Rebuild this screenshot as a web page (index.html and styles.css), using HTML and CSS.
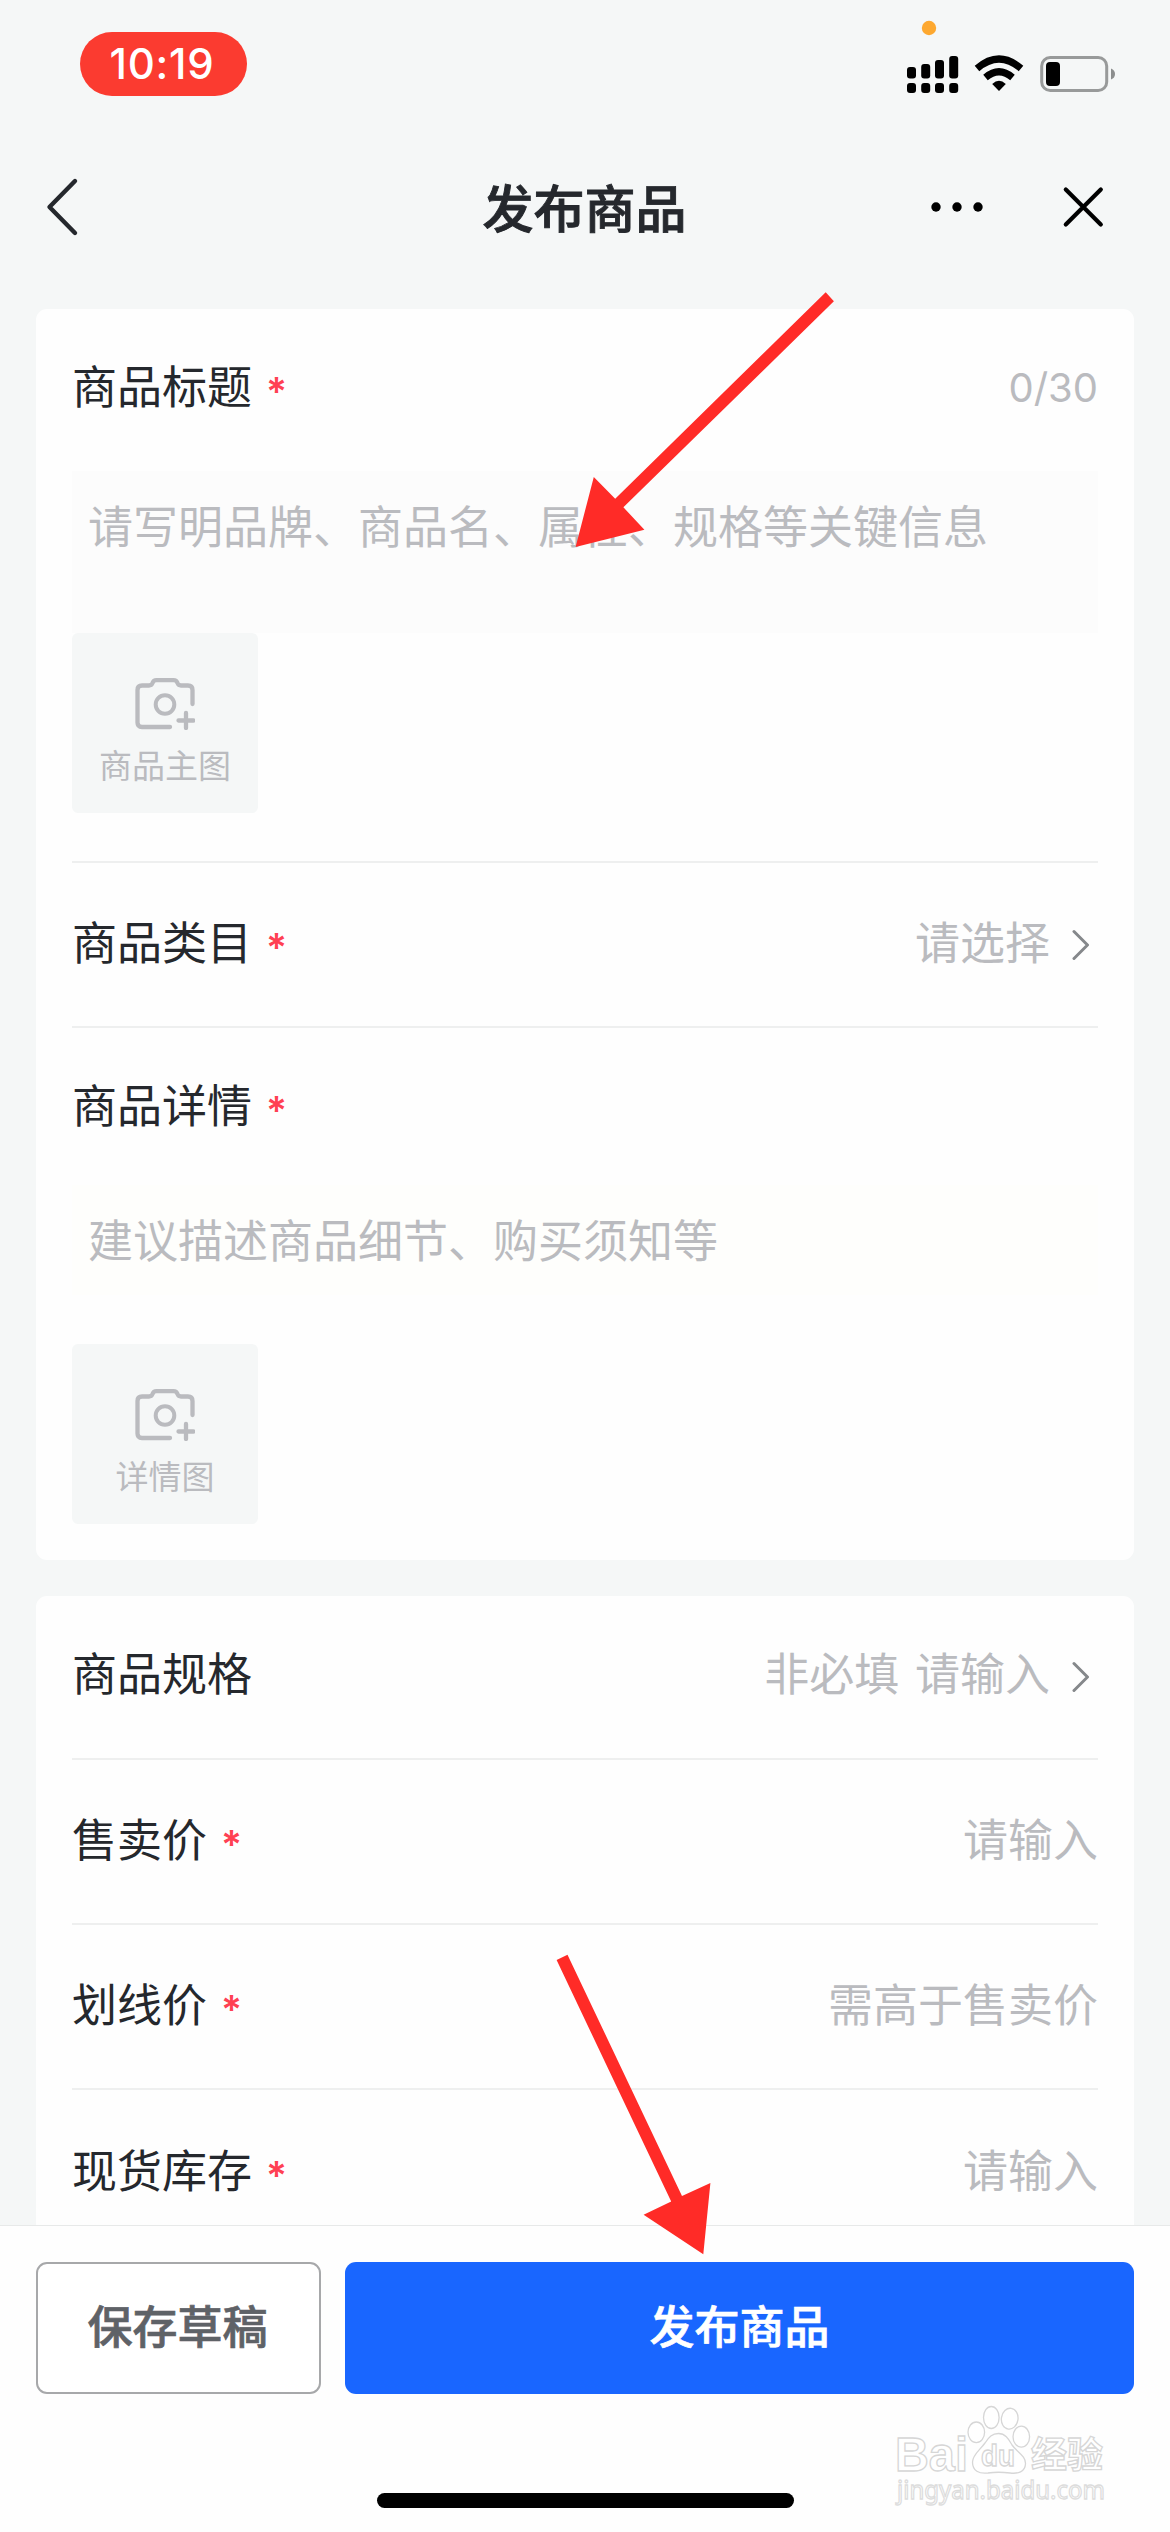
FILE: index.html
```html
<!DOCTYPE html>
<html lang="zh-CN">
<head>
<meta charset="utf-8">
<title>发布商品</title>
<link rel="stylesheet" href="styles.css">
</head>
<body>
<svg class="defs" width="0" height="0" aria-hidden="true">
  <symbol id="camera" viewBox="0 0 60 52">
    <path d="M35 49H7Q2.500 49 2.500 44.500V12Q2.500 7.500 7 7.500H14Q16.500 7.500 17.500 5Q18.500 2.200 21.500 2.200H38.500Q41.500 2.200 42.500 5Q43.500 7.500 46 7.500H53Q57.500 7.500 57.500 12V26" fill="none" stroke="currentColor" stroke-width="4.300" stroke-linecap="round"/>
    <circle cx="30" cy="26.500" r="9.300" fill="none" stroke="currentColor" stroke-width="4"/>
    <path d="M43.500 42.500H58.500M51 35V50" fill="none" stroke="currentColor" stroke-width="4.300" stroke-linecap="round"/>
  </symbol>
  <symbol id="more" viewBox="0 0 18 32">
    <path d="M2 2.500L15.500 16L2 29.500" fill="none" stroke="currentColor" stroke-width="3" stroke-linecap="round" stroke-linejoin="round"/>
  </symbol>
</svg>

<header class="status">
  <span class="clock">10:19</span>
  <svg class="status-icons" width="210" height="96" viewBox="906 0 210 96">
    <circle cx="929" cy="28" r="7.200" fill="#fda830"/>
    <g fill="#000">
      <rect x="907" y="67" width="9" height="11.500" rx="3"/>
      <rect x="921.200" y="64" width="9" height="14.500" rx="3"/>
      <rect x="935" y="60" width="9" height="18.500" rx="3"/>
      <rect x="949.200" y="56" width="9" height="22.500" rx="3"/>
      <rect x="907" y="83" width="9" height="10" rx="3"/>
      <rect x="921.200" y="83" width="9" height="10" rx="3"/>
      <rect x="935" y="83" width="9" height="10" rx="3"/>
      <rect x="949.200" y="83" width="9" height="10" rx="3"/>
      <path d="M992.200 84Q999 77.500 1005.800 84L999 91Z"/>
    </g>
    <path d="M977 68.500Q999 49.500 1021 68.500M985.500 77.500Q999 66 1012.500 77.500" fill="none" stroke="#000" stroke-width="7"/>
    <rect x="1041.700" y="57.500" width="65" height="33" rx="8.500" fill="none" stroke="#989a9a" stroke-width="3"/>
    <rect x="1046" y="62" width="14" height="24" rx="4" fill="#000"/>
    <path d="M1111 68.500Q1115 70 1115 74T1111 79.500Z" fill="#8c8e8e"/>
  </svg>
</header>

<nav class="nav">
  <svg width="34" height="60" viewBox="45 177 34 60"><path d="M75 181L49.500 207L75 233" fill="none" stroke="#25282d" stroke-width="4.400" stroke-linecap="round" stroke-linejoin="round"/></svg>
  <h1>发布商品</h1>
  <svg width="174" height="44" viewBox="930 185 174 44">
    <circle cx="936" cy="207" r="4.700"/><circle cx="957" cy="207" r="4.700"/><circle cx="978" cy="207" r="4.700"/>
    <path d="M1065.800 189.500L1100.800 224.500M1100.800 189.500L1065.800 224.500" stroke="#000" stroke-width="4.200" stroke-linecap="round"/>
  </svg>
</nav>

<main class="form">
  <section class="card">
    <div class="row head"><label>商品标题<i>*</i></label><span class="count">0/30</span></div>
    <div class="area title-area">请写明品牌、商品名、属性、规格等关键信息</div>
    <div class="upload"><svg width="60" height="52"><use href="#camera"/></svg><span>商品主图</span></div>
    <div class="row category"><label>商品类目<i>*</i></label><span class="value">请选择</span><svg class="arrow" width="18" height="32"><use href="#more"/></svg></div>
    <div class="row detail"><label>商品详情<i>*</i></label></div>
    <div class="area detail-area">建议描述商品细节、购买须知等</div>
    <div class="upload"><svg width="60" height="52"><use href="#camera"/></svg><span>详情图</span></div>
  </section>
  <section class="card">
    <div class="row line"><label>商品规格</label><span class="value">非必填 请输入</span><svg class="arrow" width="18" height="32"><use href="#more"/></svg></div>
    <div class="row line"><label>售卖价<i>*</i></label><span class="value">请输入</span></div>
    <div class="row line"><label>划线价<i>*</i></label><span class="value">需高于售卖价</span></div>
    <div class="row line"><label>现货库存<i>*</i></label><span class="value">请输入</span></div>
  </section>
</main>

<footer class="footer">
  <div class="actions">
    <button class="save">保存草稿</button>
    <button class="publish">发布商品</button>
  </div>
  <div class="home"></div>
</footer>

<svg class="overlay" width="1170" height="2532" viewBox="0 0 1170 2532">
  <g fill="#ff2b27">
    <path d="M825.700 292.300L833.900 301.300L623.400 507.300L644.400 529.700L575.600 547L593.800 477L615.200 498.700Z"/>
    <path d="M556.600 1960L567.500 1954.700L682 2196L710.400 2182.900L703.300 2254.300L643.600 2214.700L671.200 2201.600Z"/>
  </g>
  <g class="watermark">
    <text class="logo" x="895" y="2471" font-size="48" textLength="73" lengthAdjust="spacingAndGlyphs">Bai</text>
    <ellipse cx="976.300" cy="2432.300" rx="8.300" ry="10.300"/>
    <ellipse cx="991.300" cy="2417.500" rx="7.800" ry="11"/>
    <ellipse cx="1009.700" cy="2418.700" rx="8.300" ry="10.500" transform="rotate(8 1009.700 2418.700)"/>
    <ellipse cx="1021.300" cy="2436.700" rx="8.300" ry="10.500"/>
    <path d="M998.500 2433.500C1006 2433.500 1009 2440 1012 2445C1017 2452 1026 2456 1025.500 2464C1025 2472 1018 2474 1010 2473C1002 2472 995 2472 988 2473C979 2474 972.500 2471 972.500 2462C972.500 2455 980 2450 985 2443C989 2437 992 2433.500 998.500 2433.500Z"/>
    <text class="du" x="981" y="2466" font-size="29" textLength="34" lengthAdjust="spacingAndGlyphs">du</text>
    <text class="cjk" x="1031" y="2468" font-size="36">经验</text>
    <text class="url" x="897" y="2499" font-size="26" textLength="208" lengthAdjust="spacingAndGlyphs">jingyan.baidu.com</text>
  </g>
</svg>
</body>
</html>
```
FILE: styles.css
```css
* { box-sizing: border-box; }

body {
  position: relative;
  display: flex;
  flex-direction: column;
  width: 1170px;
  height: 2532px;
  margin: 0;
  overflow: hidden;
  background: #f5f7f7;
  color: #25282d;
  font-family: Inter, "Noto Sans CJK SC", sans-serif;
  font-size: 45px;
}

svg { display: block; flex: none; }
.defs { position: absolute; }

.status {
  display: flex;
  justify-content: space-between;
  height: 128px;
  padding: 0 54px 0 80px;
}
.clock {
  width: 167px;
  height: 64px;
  margin-top: 32px;
  padding-right: 3px;
  border-radius: 32px;
  background: #fb3b30;
  color: #fff;
  font-size: 42px;
  font-weight: 500;
  letter-spacing: 0.8px;
  line-height: 64px;
  text-align: center;
}

.nav {
  display: grid;
  grid-template-columns: 1fr auto 1fr;
  align-items: center;
  height: 158px;
  padding: 0 66px 0 45px;
}
.nav h1 {
  margin: 5px 0 0 20px;
  font-size: 51px;
  font-weight: 500;
  line-height: 60px;
  -webkit-text-stroke: 0.9px currentColor;
}
.nav svg:last-child { justify-self: end; }

.form {
  display: flex;
  flex: 1;
  flex-direction: column;
  gap: 36px;
  min-height: 0;
  padding: 23px 36px 0;
  overflow: hidden;
}
.card {
  flex: none;
  padding: 0 36px;
  border-radius: 11px;
  background: #fefefe;
}
.card:first-child { height: 1251px; }
.row {
  display: flex;
  align-items: center;
  line-height: 60px;
}
.row label { margin-right: auto; }
.row i {
  margin-left: 14px;
  color: #ff4053;
  font-size: 39px;
  font-style: normal;
  font-weight: 600;
  line-height: 1;
  vertical-align: -2px;
}
.head { height: 158px; margin-bottom: 4px; }
.count { color: #babbbf; font-size: 40px; }
.value { color: #babbbf; word-spacing: 3px; }
.arrow { margin: 3px 8px 0 22px; color: #85888b; }

.area { padding: 0 16px; background: #fcfcfc; color: #babbbf; }
.title-area { height: 162px; line-height: 114px; }
.detail-area {
  height: 110px;
  margin-bottom: 49px;
  background: #fefefc;
  line-height: 113px;
}

.upload {
  display: flex;
  flex-direction: column;
  align-items: center;
  gap: 16px;
  width: 186px;
  height: 180px;
  padding-top: 45px;
  border-radius: 6px;
  background: #f5f7f7;
  color: #babbbf;
  font-size: 33px;
  line-height: 40px;
}

.category {
  height: 167px;
  margin-top: 48px;
  padding-bottom: 2px;
  border-top: 2px solid #eeefef;
  border-bottom: 2px solid #eeefef;
}
.detail { height: 157px; }
.line { height: 165px; padding-bottom: 2px; border-bottom: 2px solid #eeefef; }
.line:first-child { height: 164px; padding-bottom: 4px; }
.line:last-child { border-bottom: 0; }

.footer {
  display: flex;
  flex-direction: column;
  align-items: center;
  height: 307px;
  padding: 36px 36px 24px;
  border-top: 1px solid #e7e9e9;
  background: #fefefe;
}
.actions { display: flex; gap: 24px; width: 100%; }
button {
  height: 132px;
  padding: 0;
  border: 0;
  border-radius: 11px;
  font: 500 45px/132px Inter, "Noto Sans CJK SC", sans-serif;
  -webkit-text-stroke: 0.7px currentColor;
}
.save {
  width: 285px;
  padding-right: 2px;
  border: 2px solid #a7a8aa;
  background: #fff;
  color: #5f6267;
  line-height: 128px;
}
.publish { flex: 1; background: #1966ff; color: #fff; }
.home {
  width: 417px;
  height: 15px;
  margin-top: auto;
  border-radius: 8px;
  background: #000;
}

.overlay { position: absolute; top: 0; left: 0; pointer-events: none; }
.watermark {
  fill: #fff;
  stroke: #d6d6d6;
  stroke-width: 1.3px;
  font-family: "Noto Sans", sans-serif;
}
.watermark .logo,
.watermark .du { font-family: "Liberation Sans", sans-serif; font-weight: 700; }
.watermark .cjk { font-family: "Noto Sans CJK SC", sans-serif; font-weight: 700; }
.watermark .url { stroke: #dcdcdc; }
```
